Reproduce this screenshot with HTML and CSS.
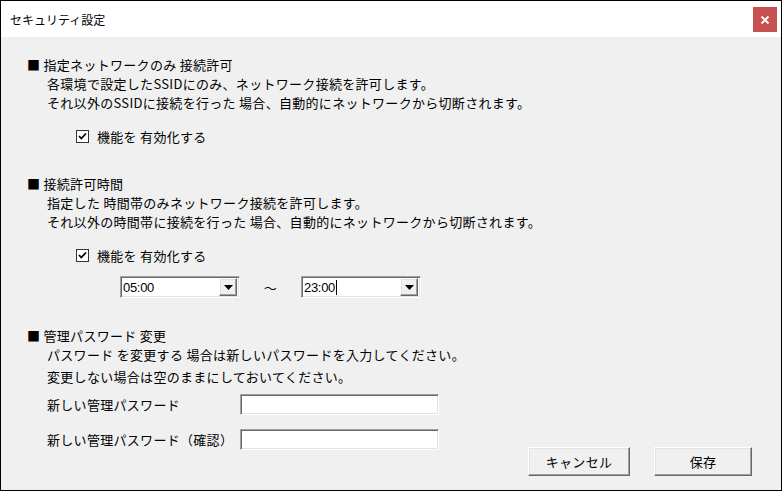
FILE: index.html
```html
<!DOCTYPE html>
<html lang="ja">
<head>
<meta charset="utf-8">
<title>セキュリティ設定</title>
<link rel="stylesheet" href="styles.css">
</head>
<body>
<div class="window">
  <div class="titlebar">
    <span class="title">セキュリティ設定</span>
    <span class="close"><svg width="10" height="10" viewBox="0 0 10 10"><path d="M1.5 1.5 L8.5 8.5 M8.5 1.5 L1.5 8.5" stroke="#fff" stroke-width="1.8" fill="none"/></svg></span>
  </div>
  <div class="client">
    <section class="sec sec1">
      <div class="head">■ 指定ネットワークのみ 接続許可</div>
      <div class="desc">各環境で設定したSSIDにのみ、ネットワーク接続を許可します。</div>
      <div class="desc">それ以外のSSIDに接続を行った 場合、自動的にネットワークから切断されます。</div>
      <div class="check"><span class="box"><svg width="11" height="11" viewBox="0 0 11 11"><path d="M2 5 L4.3 7.5 L9 2.5" stroke="#000" stroke-width="1.8" fill="none"/></svg></span><span>機能を 有効化する</span></div>
    </section>
    <section class="sec sec2">
      <div class="head">■ 接続許可時間</div>
      <div class="desc">指定した 時間帯のみネットワーク接続を許可します。</div>
      <div class="desc">それ以外の時間帯に接続を行った 場合、自動的にネットワークから切断されます。</div>
      <div class="check"><span class="box"><svg width="11" height="11" viewBox="0 0 11 11"><path d="M2 5 L4.3 7.5 L9 2.5" stroke="#000" stroke-width="1.8" fill="none"/></svg></span><span>機能を 有効化する</span></div>
      <div class="times">
        <div class="select"><span class="val">05:00</span><span class="drop"><svg width="9" height="5" viewBox="0 0 9 5"><path d="M0 0 H9 L4.5 5 Z" fill="#000"/></svg></span></div>
        <span class="tilde">～</span>
        <div class="select"><span class="val">23:00<i class="caret"></i></span><span class="drop"><svg width="9" height="5" viewBox="0 0 9 5"><path d="M0 0 H9 L4.5 5 Z" fill="#000"/></svg></span></div>
      </div>
    </section>
    <section class="sec sec3">
      <div class="head">■ 管理パスワード 変更</div>
      <div class="desc">パスワード を変更する 場合は新しいパスワードを入力してください。</div>
      <div class="desc desc2">変更しない場合は空のままにしておいてください。</div>
      <div class="bottom">
        <div class="pwform">
          <div class="pwrow"><span class="pwlabel">新しい管理パスワード</span><span class="input"></span></div>
          <div class="pwrow"><span class="pwlabel">新しい管理パスワード（確認）</span><span class="input"></span></div>
        </div>
        <div class="buttons">
          <span class="btn">キャンセル</span>
          <span class="btn btn-save">保存</span>
        </div>
      </div>
    </section>
  </div>
</div>
</body>
</html>
```

FILE: styles.css
```css
html, body {
  margin: 0;
  padding: 0;
  background: #ffffff;
}
body {
  font-family: "Noto Sans CJK JP", "Noto Sans", sans-serif;
  font-size: 12px;
  color: #000;
}
.window {
  box-sizing: border-box;
  width: 782px;
  height: 491px;
  border: 1px solid #000;
  background: #f0f0f0;
  display: flex;
  flex-direction: column;
}
.titlebar {
  height: 36px;
  background: #fff;
  display: flex;
  align-items: center;
  padding-left: 9px;
  flex: none;
}
.title {
  font-size: 12px;
  line-height: 16px;
  margin-top: 1px;
}
.close {
  margin-left: auto;
  margin-right: 4px;
  margin-top: 1px;
  width: 24px;
  height: 25px;
  background: #c75050;
  display: flex;
  align-items: center;
  justify-content: center;
}
.close svg { display: block; }
.client {
  flex: 1;
  padding: 18px 29px 0 26px;
  line-height: 19px;
  font-size: 13px;
  letter-spacing: 0.3px;
}
.head {
  height: 19px;
}
.desc {
  padding-left: 20px;
  height: 19px;
}
.sec2 { margin-top: 28px; }
.sec3 { margin-top: 28px; }
.desc2 { margin-top: 3px; }
.check {
  display: flex;
  align-items: center;
  margin-top: 15px;
  padding-left: 49px;
  height: 19px;
}
.box {
  box-sizing: border-box;
  width: 13px;
  height: 13px;
  background: #fff;
  border: 1px solid #333;
  display: flex;
  align-items: center;
  justify-content: center;
  margin-right: 8px;
}
.box svg { display: block; }
.times {
  display: flex;
  align-items: center;
  margin-top: 11px;
  padding-left: 93px;
}
.select {
  box-sizing: border-box;
  width: 120px;
  height: 22px;
  background: #fff;
  border-top: 1px solid #a0a0a0;
  border-left: 1px solid #a0a0a0;
  border-right: 1px solid #fff;
  border-bottom: 1px solid #fff;
  box-shadow: inset 1px 1px 0 #696969, inset -1px -1px 0 #e3e3e3;
  display: flex;
  align-items: stretch;
  padding: 1px 2px 1px 2px;
}
.val {
  flex: 1;
  display: flex;
  align-items: center;
  font-family: "Liberation Sans", sans-serif;
  font-size: 13px;
  letter-spacing: -0.3px;
}
.caret {
  display: inline-block;
  width: 1px;
  height: 15px;
  background: #000;
  margin-left: 1px;
}
.drop {
  width: 18px;
  background: #f0f0f0;
  box-sizing: border-box;
  border-top: 1px solid #fff;
  border-left: 1px solid #fff;
  border-right: 1px solid #696969;
  border-bottom: 1px solid #696969;
  box-shadow: inset -1px -1px 0 #a0a0a0, inset 1px 1px 0 #e3e3e3;
  display: flex;
  align-items: center;
  justify-content: center;
}
.drop svg { display: block; }
.tilde {
  width: 61px;
  text-align: center;
}
.bottom {
  display: flex;
  align-items: flex-start;
  margin-top: 8px;
}
.pwrow {
  display: flex;
  align-items: center;
  height: 21px;
  margin-bottom: 14px;
  padding-left: 20px;
}
.pwlabel {
  width: 193px;
}
.input {
  box-sizing: border-box;
  width: 199px;
  height: 21px;
  background: #fff;
  border-top: 1px solid #a0a0a0;
  border-left: 1px solid #a0a0a0;
  border-right: 1px solid #fff;
  border-bottom: 1px solid #fff;
  box-shadow: inset 1px 1px 0 #696969, inset -1px -1px 0 #e3e3e3;
}
.buttons {
  margin-left: auto;
  margin-top: 53px;
  display: flex;
  gap: 24px;
}
.btn {
  box-sizing: border-box;
  width: 102px;
  height: 29px;
  background: #f0f0f0;
  border-top: 1px solid #fff;
  border-left: 1px solid #fff;
  border-right: 1px solid #696969;
  border-bottom: 1px solid #696969;
  box-shadow: inset -1px -1px 0 #a0a0a0, inset 1px 1px 0 #e3e3e3;
  display: flex;
  align-items: center;
  justify-content: center;
}
.btn-save { width: 98px; }
```
